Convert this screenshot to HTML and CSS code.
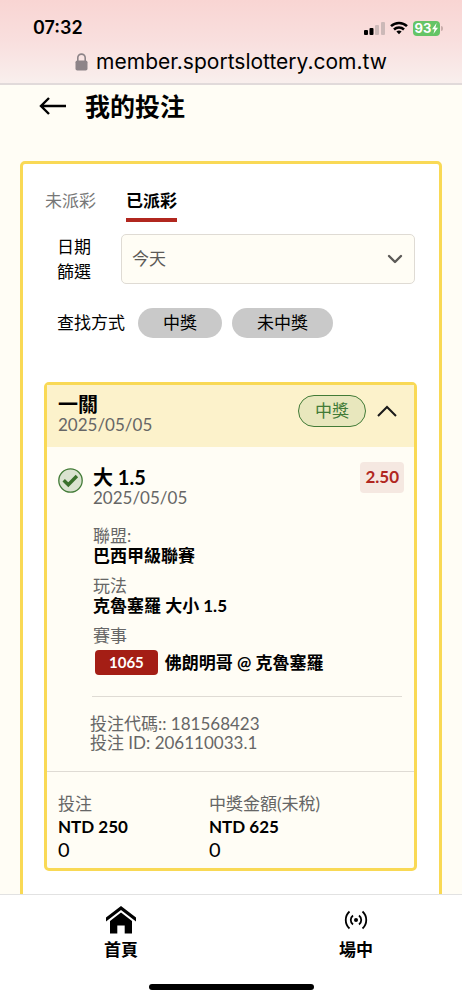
FILE: index.html
```html
<!DOCTYPE html>
<html lang="zh-Hant">
<head>
<meta charset="utf-8">
<meta name="viewport" content="width=device-width, initial-scale=1">
<title>我的投注</title>
<link rel="stylesheet" href="styles.css">
</head>
<body>
<div class="app">
  <header class="browser">
    <div class="status">
      <time class="clock">07:32</time>
      <div class="status-icons">
        <svg width="21" height="13" viewBox="0 0 21 13" aria-hidden="true">
          <rect x="0" y="8" width="4" height="5" rx="1"/>
          <rect x="5.500" y="6" width="4" height="7" rx="1"/>
          <rect x="11" y="3" width="4" height="10" rx="1" fill="#ccb9b8"/>
          <rect x="17" y="0" width="4" height="13" rx="1" fill="#ccb9b8"/>
        </svg>
        <svg width="18" height="14" viewBox="0 0 18 14" fill="none" stroke="#000" stroke-width="2.5" aria-hidden="true">
          <path d="M1 5.2a11.5 11.5 0 0 1 16 0"/>
          <path d="M4 8.5a7.2 7.2 0 0 1 10 0"/>
          <path d="M9 13.2 6.4 10.6a3.8 3.8 0 0 1 5.2 0z" fill="#000" stroke="none"/>
        </svg>
        <div class="battery">
          <span class="battery-level">93<svg width="6" height="11" viewBox="0 0 6 11" aria-hidden="true"><path d="M4.6 0 0 6.2h2.6L1.4 11 6 4.8H3.4z" fill="#fff"/></svg></span>
          <span class="battery-tip"></span>
        </div>
      </div>
    </div>
    <div class="address">
      <svg width="13" height="18" viewBox="0 0 13 18" aria-hidden="true">
        <path d="M2.8 8V4.8a3.7 3.7 0 0 1 7.4 0V8" fill="none" stroke="#8d8488" stroke-width="1.6"/>
        <rect x="0.5" y="7.5" width="12" height="10" rx="1.8" fill="#8d8488"/>
      </svg>
      <span>member.sportslottery.com.tw</span>
    </div>
  </header>

  <main class="content">
    <div class="title-row">
      <button class="back" aria-label="返回">
        <svg width="28" height="20" viewBox="0 0 28 20" fill="none" stroke="#000" stroke-width="2.4" aria-hidden="true"><path d="M27 10H2M10 2 2 10l8 8"/></svg>
      </button>
      <h1>我的投注</h1>
    </div>

    <section class="panel">
      <div class="tabs" role="tablist">
        <button class="tab" role="tab" aria-selected="false">未派彩</button>
        <button class="tab tab-active" role="tab" aria-selected="true">已派彩</button>
      </div>

      <div class="filter-date">
        <label for="date">日期篩選</label>
        <div class="select-wrap">
          <select id="date"><option>今天</option></select>
          <svg class="select-arrow" width="16" height="10" viewBox="0 0 16 10" fill="none" stroke="#5c5a57" stroke-width="2.4" stroke-linecap="round" stroke-linejoin="round" aria-hidden="true"><path d="m2 2 6 6 6-6"/></svg>
        </div>
      </div>

      <div class="filter-result">
        <span>查找方式</span>
        <button class="chip">中獎</button>
        <button class="chip">未中獎</button>
      </div>

      <article class="bet">
        <header class="bet-head">
          <div>
            <h2 class="bet-title">一關</h2>
            <time class="date">2025/05/05</time>
          </div>
          <div class="bet-state">
            <span class="won">中獎</span>
            <button class="toggle" aria-label="收合">
              <svg width="20" height="12" viewBox="0 0 20 12" fill="none" stroke="#1a1a1a" stroke-width="2" aria-hidden="true"><path d="m1 11 9-9 9 9"/></svg>
            </button>
          </div>
        </header>

        <div class="bet-body">
          <svg class="check" width="25" height="25" viewBox="0 0 25 25" fill="none" aria-hidden="true">
            <circle cx="12.5" cy="12.5" r="11.7" fill="#dae3d0" stroke="#427b37" stroke-width="1.3"/>
            <path d="m5.7 12.2 4.6 4.6 8.6-8.8" stroke="#39702b" stroke-width="3.4"/>
          </svg>
          <div class="detail">
            <div class="pick">
              <div>
                <h3 class="bet-title">大 1.5</h3>
                <time class="date">2025/05/05</time>
              </div>
              <span class="odds">2.50</span>
            </div>
            <dl class="facts">
              <div><dt>聯盟:</dt><dd>巴西甲級聯賽</dd></div>
              <div><dt>玩法</dt><dd>克魯塞羅 大小 1.5</dd></div>
              <div><dt>賽事</dt><dd class="match"><span class="code">1065</span>佛朗明哥 @ 克魯塞羅</dd></div>
            </dl>
          </div>
        </div>
        <hr class="rule">
        <div class="ids">
          <p>投注代碼:: 181568423</p>
          <p>投注 ID: 206110033.1</p>
        </div>

        <footer class="totals">
          <div><p class="total-label">投注</p><p class="amount">NTD 250</p><p class="extra">0</p></div>
          <div><p class="total-label">中獎金額(未稅)</p><p class="amount">NTD 625</p><p class="extra">0</p></div>
        </footer>
      </article>
    </section>
  </main>

  <nav class="bottom">
    <div class="links">
      <a class="link" href="#home">
        <svg width="30" height="28" viewBox="0 0 30 28" aria-hidden="true">
          <path d="M15 0 30 11.5v4L15 4 0 15.500v-4z"/>
          <path d="M15 6.500 26 15v12.500h-7.300v-8h-7.400v8H4V15z"/>
        </svg>
        <span>首頁</span>
      </a>
      <a class="link" href="#live">
        <svg width="24" height="28" viewBox="0 0 24 28" fill="none" stroke="#000" stroke-width="1.800" aria-hidden="true">
          <circle cx="12" cy="14" r="2" fill="#000" stroke="none"/>
          <path d="M9 9.500c-3 2.300-3 6.700 0 9M15 9.500c3 2.300 3 6.700 0 9M5.500 5.500c-5 4.500-5 12.500 0 17M18.500 5.500c5 4.500 5 12.500 0 17"/>
        </svg>
        <span>場中</span>
      </a>
    </div>
    <div class="home-bar"></div>
  </nav>
</div>
</body>
</html>
```
FILE: styles.css
```css
* { box-sizing: border-box; }

body, h1, h2, h3, p, dl, dd { margin: 0; }

body {
  font: 17px/24px Lato, "Noto Sans CJK TC", sans-serif;
  color: #000;
  background: #fffdf5;
}

button, select { font: inherit; color: inherit; }

button {
  padding: 0;
  border: 0;
  background: none;
}

svg { display: block; flex: none; }

.app {
  display: flex;
  flex-direction: column;
  height: 100vh;
}

/* Browser chrome */
.browser {
  flex: none;
  padding: 16px 19px 8px 33px;
  border-bottom: 2px solid #e1dada;
  background: linear-gradient(#f9d5d3, #f9dfde 50%, #f9efed);
  font-family: Inter, sans-serif;
}

.status {
  display: flex;
  align-items: center;
  justify-content: space-between;
}

.clock { font-size: 18px; font-weight: 600; }

.status-icons {
  display: flex;
  align-items: center;
  gap: 5px;
}

.battery { display: flex; align-items: center; gap: 1px; }

.battery-level {
  display: flex;
  align-items: center;
  justify-content: center;
  gap: 1px;
  width: 27px;
  height: 15px;
  border-radius: 4px;
  background: #65c466;
  color: #fff;
  font-size: 13px;
  font-weight: 700;
}

.battery-tip {
  width: 2px;
  height: 5px;
  border-radius: 0 2px 2px 0;
  background: #c9adab;
}

.address {
  display: flex;
  align-items: center;
  justify-content: center;
  gap: 8px;
  margin: 8px 14px 0 0;
  font-size: 21px;
  line-height: 27px;
}

/* Page */
.content {
  flex: 1;
  min-height: 0;
  overflow: hidden;
  padding: 0 20px;
}

.title-row {
  display: flex;
  align-items: center;
  gap: 18px;
  padding: 3px 19px 0;
}

h1 {
  font-size: 25px;
  line-height: 36px;
  font-weight: 700;
}

.panel {
  margin-top: 37px;
  padding: 25px 22px 40px;
  border: 3px solid #f9d955;
  border-radius: 5px;
  background: #fff;
}

.tabs { display: flex; gap: 30px; }

.tab {
  padding-bottom: 5px;
  border-bottom: 4px solid transparent;
  color: #777;
}

.tab-active {
  border-color: #b1271f;
  color: #000;
  font-weight: 700;
}

.filter-date {
  display: flex;
  align-items: center;
  gap: 28px;
  margin: 12px 2px 0 12px;
}

.filter-date label { width: 36px; line-height: 25px; }

.select-wrap {
  flex: 1;
  display: grid;
  align-items: center;
}

.select-wrap > * { grid-area: 1 / 1; }

select {
  width: 100%;
  height: 50px;
  padding: 0 10px;
  border: 1px solid #dfdbd4;
  border-radius: 5px;
  background: #fffdf5;
  color: #5c5a57;
  appearance: none;
}

.select-arrow {
  justify-self: end;
  margin-right: 12px;
  pointer-events: none;
}

.filter-result {
  display: flex;
  align-items: center;
  gap: 10px;
  margin: 24px 0 0 12px;
}

.filter-result span { margin-right: 3px; }

.chip {
  height: 30px;
  padding: 0 25px;
  border-radius: 15px;
  background: #c9c9c9;
}

/* Bet card */
.bet {
  margin: 44px 0 0 -1px;
  border: 3px solid #f9d955;
  border-radius: 5px;
  background: #fffdf5;
}

.bet-head {
  display: flex;
  justify-content: space-between;
  padding: 9px 17px 12px 11px;
  background: #fcf2cb;
}

.bet-title {
  font-size: 20px;
  line-height: 20px;
  font-weight: 700;
}

.date {
  display: block;
  line-height: 20px;
  color: #666;
}

.bet-state {
  display: flex;
  align-items: center;
  gap: 11px;
  height: 34px;
}

.won {
  padding: 3px 16px;
  border: 1px solid #427b37;
  border-radius: 16px;
  background: #e8e7bd;
  color: #427b37;
}

.bet-body {
  display: flex;
  gap: 10px;
  padding: 20px 10px 0 11px;
}

.detail { flex: 1; }

.bet-title + .date { margin-top: 1px; }

.pick {
  display: flex;
  justify-content: space-between;
  align-items: flex-start;
}

.check { margin-top: 1px; }

.odds {
  margin-top: -5px;
  padding: 3px 5px 4px;
  border-radius: 4px;
  background: #f5e8e1;
  color: #b1271f;
  font-weight: 700;
}

.facts {
  display: grid;
  gap: 10px;
  margin-top: 18px;
  line-height: 20px;
}

dt { color: #666; }
dd { font-weight: 700; }

.match {
  display: flex;
  align-items: center;
  gap: 7px;
  padding: 4px 0 0 2px;
}

.code {
  padding: 2px 14px 3px;
  border-radius: 4px;
  background: #a41e15;
  color: #fff;
  font-size: 15px;
}

.rule {
  margin: 21px 12px 0 45px;
  border: 0;
  border-top: 1px solid #dfdbd4;
}

.ids {
  padding: 17px 12px 19px 43px;
  color: #666;
  line-height: 19px;
}

.totals {
  display: grid;
  grid-template-columns: 151px 1fr;
  padding: 20px 11px 7px;
  border-top: 1px solid #dfdbd4;
}

.total-label { color: #666; line-height: 23px; }

.amount { font-weight: 700; line-height: 23px; }

.extra { font-size: 20px; line-height: 23px; }

/* Bottom navigation */
.bottom {
  flex: none;
  padding: 11px 0 10px;
  border-top: 1px solid #e2e2e2;
  background: #fff;
}

.links {
  display: grid;
  grid-template-columns: 1fr 1fr;
  justify-items: center;
  gap: 23px;
  padding-left: 15px;
}

.link {
  display: flex;
  flex-direction: column;
  align-items: center;
  gap: 4px;
  color: #000;
  font-weight: 700;
  text-decoration: none;
}

.home-bar {
  width: 165px;
  height: 6px;
  margin: 22px auto 0;
  border-radius: 3px;
  background: #000;
}
```
